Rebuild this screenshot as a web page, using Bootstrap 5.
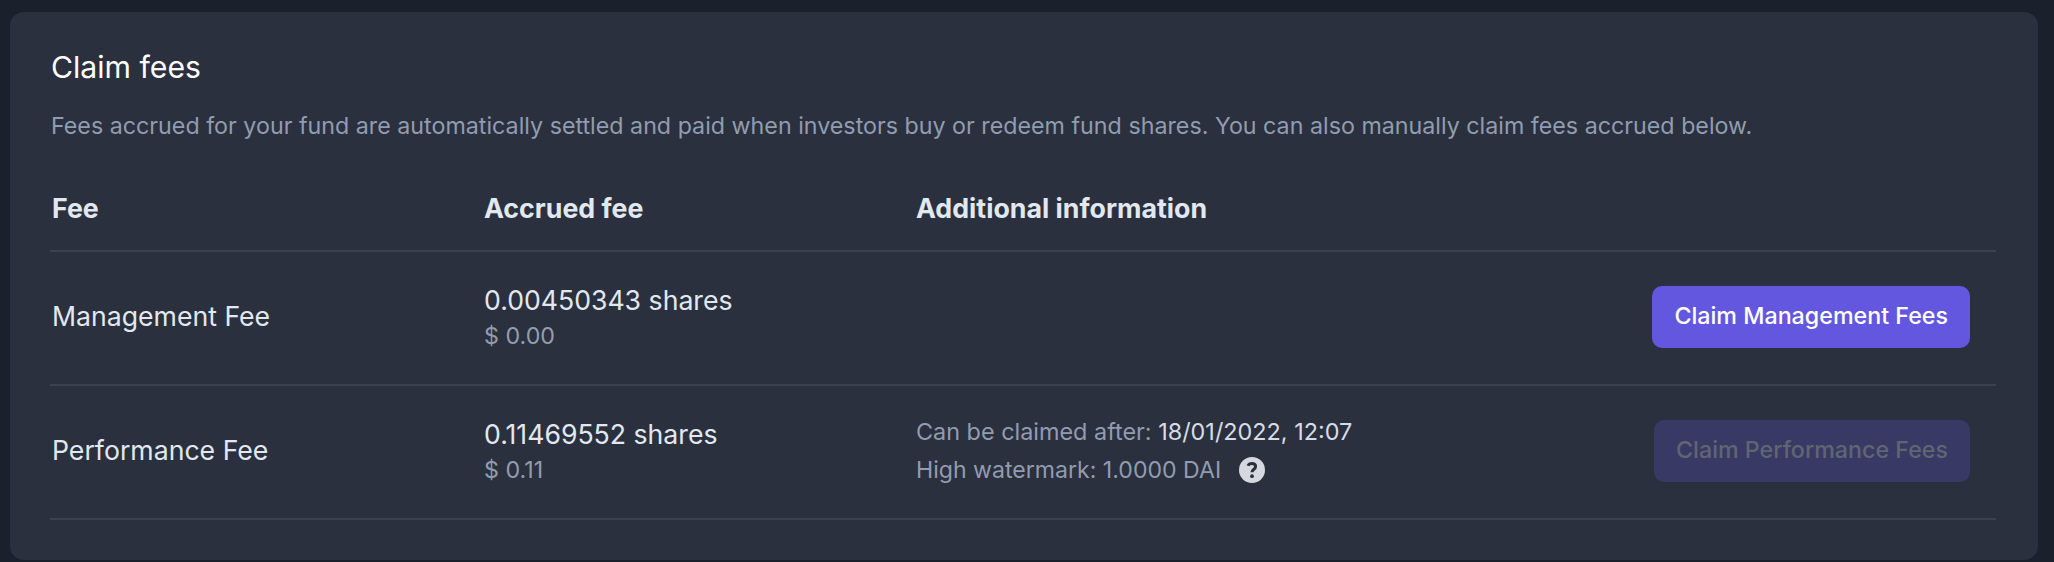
<!DOCTYPE html>
<html lang="en">
<head>
<meta charset="utf-8">
<title>Claim fees</title>
<link href="https://cdn.jsdelivr.net/npm/bootstrap@5.3.0/dist/css/bootstrap.min.css" rel="stylesheet">
<style>
body{background:#1a202c;font-family:Inter,sans-serif;color:#e2e8f0;height:562px;overflow:hidden}
.panel{background:#2a303d;border-radius:14px;margin:12px 16px 0 10px;height:548px;padding:36px 42px 0 40px}
.title{font-size:30.2px;line-height:38px;font-weight:400;color:#fff;padding-left:1px}
.intro{font-size:23.25px;line-height:32px;color:#919cb1;margin-top:24px;padding-left:1px;white-space:nowrap}
.fee-row{display:grid;grid-template-columns:432px 432px 1fr auto;align-items:center;border-bottom:2px solid #374253;padding:0 26px 2px 2px;height:134px;font-size:26.65px;line-height:35px;white-space:nowrap}
.head-row{font-size:26.75px;font-weight:700;height:84px;margin-top:26px}
.fee-name{padding-bottom:2px}
.accrued{padding-top:1px}
.muted{color:#919cb1}
.sub{font-size:23.25px}
.info{line-height:38px;font-size:23.4px}
.info .date{color:#d6dce6}
.watermark{font-size:23.1px}
.help{margin-left:18px}
.btn-claim{background:#6357e0;color:#fff;font-size:23.25px;font-weight:500;line-height:30px;height:62px;border:0;border-radius:10px;padding:0 22px 2px}
.btn-claim:disabled{background:#393966;color:#5f6672;opacity:1}
</style>
</head>
<body>
<main class="panel">
<h1 class="title mb-0">Claim fees</h1>
<p class="intro mb-0">Fees accrued for your fund are automatically settled and paid when investors buy or redeem fund shares. You can also manually claim fees accrued below.</p>
<div class="fee-row head-row"><div>Fee</div><div>Accrued fee</div><div>Additional information</div></div>
<div class="fee-row"><div class="fee-name">Management Fee</div><div class="accrued"><div>0.00450343 shares</div><div class="sub muted">$ 0.00</div></div><div></div><button class="btn btn-claim">Claim Management Fees</button></div>
<div class="fee-row"><div class="fee-name">Performance Fee</div><div class="accrued"><div>0.11469552 shares</div><div class="sub muted">$ 0.11</div></div>
<div class="info"><div><span class="muted">Can be claimed after:</span> <span class="date">18/01/2022, 12:07</span></div><div class="watermark muted d-flex align-items-center">High watermark: 1.0000 DAI
<svg class="help" width="26" height="26" viewBox="0 0 26 26" role="img" aria-label="Help"><circle cx="13" cy="13" r="13" fill="#d5d9df"/><path d="M9 8.8C9.7 7.1 11 6.4 12.9 6.4c2.2 0 3.7 1.3 3.7 3.1 0 2.8-3.6 2.7-3.6 5.8" fill="none" stroke="#2a303d" stroke-width="3"/><circle cx="13" cy="19.2" r="1.9" fill="#2a303d"/></svg></div></div>
<button class="btn btn-claim" disabled>Claim Performance Fees</button></div>
</main>
<script src="https://cdn.jsdelivr.net/npm/bootstrap@5.3.0/dist/js/bootstrap.bundle.min.js"></script>
</body>
</html>
